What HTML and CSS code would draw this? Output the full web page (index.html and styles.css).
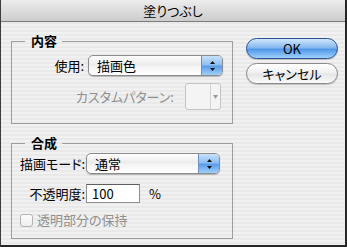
FILE: index.html
```html
<!DOCTYPE html>
<html lang="ja">
<head>
  <meta charset="UTF-8">
  <meta name="viewport" content="width=device-width, initial-scale=1.0">
  <title>塗りつぶし</title>
  <link rel="stylesheet" href="styles.css">
</head>
<body>
  <div class="dialog">
    <div class="titlebar">塗りつぶし</div>

    <div class="dialog-body">
      <div class="groups">
        <!-- 内容: 使用する色とカスタムパターン -->
        <fieldset class="group group-contents">
          <legend>内容</legend>
          <div class="row">
            <label>使用:</label>
            <div class="popup popup-use">
              <span class="popup-text">描画色</span>
              <span class="popup-arrows">
                <svg width="7" height="12" viewBox="0 0 7 12"><path d="M3.5 1 L6 4 L1 4 Z"/><path d="M1 8 L6 8 L3.5 11 Z"/></svg>
              </span>
            </div>
          </div>
          <div class="row row-pattern disabled">
            <label>カスタムパターン:</label>
            <div class="pattern-picker">
              <span class="swatch"></span>
              <span class="pattern-arrow">
                <svg width="5" height="4" viewBox="0 0 5 4"><path d="M0 0 L5 0 L2.5 4 Z"/></svg>
              </span>
            </div>
          </div>
        </fieldset>

        <!-- 合成: 描画モードと不透明度 -->
        <fieldset class="group group-blend">
          <legend>合成</legend>
          <div class="blend-grid">
            <label>描画モード:</label>
            <div class="popup popup-mode">
              <span class="popup-text">通常</span>
              <span class="popup-arrows">
                <svg width="7" height="12" viewBox="0 0 7 12"><path d="M3.5 1 L6 4 L1 4 Z"/><path d="M1 8 L6 8 L3.5 11 Z"/></svg>
              </span>
            </div>
            <label class="opacity-label">不透明度:</label>
            <div class="opacity">
              <input type="text" class="text-field" value="100">
              <span class="unit">%</span>
            </div>
            <label class="checkbox disabled"><span class="check-box"></span>透明部分の保持</label>
          </div>
        </fieldset>
      </div>

      <div class="buttons">
        <button class="btn btn-default">OK</button>
        <button class="btn">キャンセル</button>
      </div>
    </div>
  </div>
</body>
</html>
```

FILE: styles.css
```css
/* Aqua 風ダイアログ全体 */
body {
  margin: 0;
  font-family: "Noto Sans CJK JP", "Noto Sans", sans-serif;
  font-size: 13px;
  font-feature-settings: "palt";
  color: #000;
}
.dialog {
  width: 347px;
  height: 247px;
  box-sizing: border-box;
  border-left: 1px solid #3c3c3c;
  border-right: 2px solid #262626;
  border-bottom: 2px solid #262626;
  background: repeating-linear-gradient(to bottom, #f1f1f1 0 2px, #e9e9e9 2px 4px);
  display: flex;
  flex-direction: column;
  overflow: hidden;
}
.titlebar {
  height: 21px;
  line-height: 21px;
  text-align: center;
  border-bottom: 1px solid #7b7b7b;
  background: linear-gradient(to bottom, #ececec, #cdcdcd);
}
.dialog-body {
  display: flex;
  padding-left: 10px;
}

/* グループボックス */
.groups {
  width: 222px;
}
.group {
  margin: 12px 0 0;
  padding: 0 9px 10px 8px;
  border: 1px solid #9d9d9d;
  min-width: 0;
  line-height: 16px;
}
.group-contents {
  padding-bottom: 13px;
}
.group legend {
  margin-left: 5px;
  padding: 0 5px 0 6px;
  line-height: 14px;
  font-weight: bold;
}
.row {
  display: flex;
  align-items: center;
  justify-content: flex-end;
}
.row label {
  margin-right: 4px;
}
.group-contents .row:first-of-type {
  margin-top: 7px;
}
.row-pattern {
  margin-top: 7px;
}
.row-pattern label {
  margin-right: 11px;
}
.disabled {
  color: #8f8f8f;
}

/* ポップアップメニュー */
.popup {
  display: flex;
  align-items: center;
  height: 21px;
  box-sizing: border-box;
  border: 1px solid #8c8c8c;
  border-radius: 5px;
  background: linear-gradient(to bottom, #fefefe 0%, #ececec 45%, #f4f4f4 55%, #ffffff 100%);
  box-shadow: 0 1px 1px rgba(0, 0, 0, 0.25);
  overflow: hidden;
}
.popup-use {
  width: 135px;
}
.popup-text {
  flex: 1;
  padding-left: 8px;
  line-height: 14px;
}
.popup-arrows {
  width: 20px;
  height: 100%;
  display: flex;
  align-items: center;
  justify-content: center;
  border-left: 1px solid #6d8fc0;
  background: linear-gradient(to bottom, #c9e1fa 0%, #8fbff2 45%, #5c9de9 55%, #9fd0fa 100%);
}
.popup-arrows svg {
  fill: #111;
}

/* カスタムパターン（無効） */
.pattern-picker {
  display: flex;
  width: 36px;
  height: 27px;
  box-sizing: border-box;
  margin-right: 2px;
  border: 1px solid #c4c4c4;
  border-radius: 3px;
  background: #f4f4f4;
}
.swatch {
  flex: 1;
  border-right: 1px solid #d2d2d2;
}
.pattern-arrow {
  width: 9px;
  display: flex;
  align-items: center;
  justify-content: center;
}
.pattern-arrow svg {
  fill: #9a9a9a;
}

/* 合成 */
.blend-grid {
  display: grid;
  grid-template-columns: auto 1fr;
  column-gap: 1px;
  align-items: center;
  margin-top: 3px;
}
.blend-grid > label {
  justify-self: end;
}
.popup-mode {
  width: 134px;
}
.opacity,
.opacity-label {
  margin-top: 10px;
}
.opacity {
  display: flex;
  align-items: center;
}
.text-field {
  width: 54px;
  height: 19px;
  box-sizing: border-box;
  margin: 0;
  padding: 0 0 0 5px;
  border: 1px solid #8e8e8e;
  border-top-color: #5f5f5f;
  background: #fff;
  font: inherit;
  line-height: 17px;
  outline: none;
}
.unit {
  margin-left: 9px;
}
.blend-grid > .checkbox {
  grid-column: 1 / 3;
  justify-self: start;
  display: flex;
  align-items: center;
  margin-top: 9px;
}
.check-box {
  width: 13px;
  height: 13px;
  box-sizing: border-box;
  margin-right: 4px;
  border: 1px solid #b3b3b3;
  border-radius: 3px;
  background: linear-gradient(to bottom, #fdfdfd, #eeeeee);
}

/* ボタン */
.buttons {
  display: flex;
  flex-direction: column;
  gap: 4px;
  width: 92px;
  margin-left: 13px;
  padding-top: 16px;
}
.btn {
  height: 21px;
  margin: 0;
  padding: 0;
  border: 1px solid #8a8a8a;
  border-radius: 11px;
  font: inherit;
  line-height: 19px;
  color: #000;
  background: linear-gradient(to bottom, #ffffff 0%, #f0f0f0 45%, #e6e6e6 55%, #fbfbfb 100%);
  box-shadow: 0 1px 1px rgba(0, 0, 0, 0.2);
}
.btn-default {
  border-color: #2b4f94;
  background: linear-gradient(to bottom, #d2e7fc 0%, #86b9f0 45%, #5097e8 55%, #9fd2fb 100%);
}
```
